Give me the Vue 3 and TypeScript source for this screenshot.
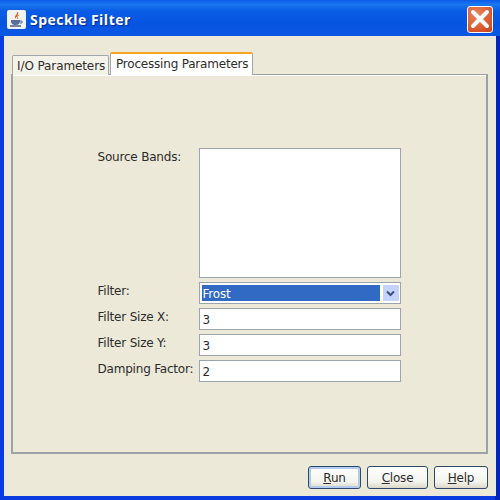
<script setup lang="ts">
import { ref } from "vue";

const tabs = ["I/O Parameters", "Processing Parameters"];
const activeTab = ref(1);

const fields = [
  { label: "Filter Size X:", value: "3" },
  { label: "Filter Size Y:", value: "3" },
  { label: "Damping Factor:", value: "2" },
];

const buttons = [
  { key: "R", rest: "un", cls: "btn-run" },
  { key: "C", rest: "lose", cls: "btn-close" },
  { key: "H", rest: "elp", cls: "btn-help" },
];
</script>

<template>
  <div class="window">
    <div class="titlebar">
      <div class="app-icon">
        <svg width="19" height="19" viewBox="0 0 19 19">
          <path d="M10 2c1 2-2 3-2 5 0 1 1 2 1 2-1-2 3-3 2-7z" fill="#d8572a" />
          <path d="M12 5c-2 1-2 2-1 4" stroke="#e0803a" stroke-width="1" fill="none" />
          <path d="M4 10h9v1c0 3-2 4-4.500 4S4 14 4 11z" fill="#5a6f9a" />
          <path d="M13 11h2v2h-2" stroke="#5a6f9a" stroke-width="1" fill="none" />
          <path d="M3 16h11" stroke="#4a5f8a" stroke-width="1.500" />
        </svg>
      </div>
      <span class="title">Speckle Filter</span>
      <div class="close-x">
        <svg width="20" height="20" viewBox="0 0 20 20">
          <path d="M3 3l14 14M17 3L3 17" stroke="#fff" stroke-width="4" stroke-linecap="round" />
        </svg>
      </div>
    </div>

    <div class="body">
      <div class="tabs">
        <div
          v-for="(tab, i) in tabs"
          :key="tab"
          class="tab"
          :class="{ active: i === activeTab }"
        >
          {{ tab }}
        </div>
      </div>

      <div class="panel">
        <div class="form">
          <div class="label">Source Bands:</div>
          <div class="listbox"></div>

          <div class="label">Filter:</div>
          <div class="combo">
            <div class="combo-value">Frost</div>
            <div class="combo-arrow">
              <svg width="9" height="7" viewBox="0 0 9 7">
                <path d="M1 1.500l3.500 3.500L8 1.500" stroke="#3c4f80" stroke-width="2" fill="none" />
              </svg>
            </div>
          </div>

          <template v-for="f in fields" :key="f.label">
            <div class="label">{{ f.label }}</div>
            <div class="input">{{ f.value }}</div>
          </template>
        </div>
      </div>

      <div class="footer">
        <div v-for="b in buttons" :key="b.key" class="btn" :class="b.cls">
          <span><u>{{ b.key }}</u>{{ b.rest }}</span>
        </div>
      </div>
    </div>
  </div>
</template>

<style>
html,
body {
  margin: 0;
  background: #0831d9;
}
</style>

<style scoped>
.window {
  width: 500px;
  height: 500px;
  box-sizing: border-box;
  display: flex;
  flex-direction: column;
  background: linear-gradient(90deg, #0a3be0 0 99%, #0426b8 99%);
  font-family: "DejaVu Sans", sans-serif;
  font-size: 12px;
  letter-spacing: -0.2px;
  color: #2c2c2c;
  overflow: hidden;
}

.titlebar {
  height: 36px;
  flex: none;
  box-sizing: border-box;
  padding: 5px 7px 3px 7px;
  display: flex;
  align-items: center;
  background: linear-gradient(180deg, #0a5ae8 0%, #1a78f0 12%, #0a5ce6 30%, #0654e0 70%, #0a58e4 100%);
}

.app-icon {
  width: 19px;
  height: 19px;
  background: #f2f2ee;
  border-radius: 2px;
  flex: none;
}

.title {
  margin-left: 4px;
  color: #fff;
  font-family: "Open Sans", sans-serif;
  font-weight: bold;
  font-size: 14px;
  letter-spacing: 0.5px;
  text-shadow: 1px 1px 1px #0a2a90;
}

.close-x {
  margin-left: auto;
  width: 26px;
  height: 27px;
  flex: none;
  box-sizing: border-box;
  border: 1px solid #fff;
  border-radius: 3px;
  background: radial-gradient(circle at 35% 30%, #e8845c, #d9582e 65%, #c4421c);
  display: flex;
  align-items: center;
  justify-content: center;
}

.body {
  flex: 1;
  min-height: 0;
  margin: 0 4px 4px;
  box-sizing: border-box;
  padding: 16px 8px 0 7px;
  background: #ece9d8;
  display: flex;
  flex-direction: column;
}

.tabs {
  display: flex;
  align-items: flex-end;
  height: 23px;
  padding-left: 1px;
  flex: none;
  position: relative;
  z-index: 1;
  margin-bottom: -1px;
}

.tab {
  box-sizing: border-box;
  height: 20px;
  width: 97px;
  margin-right: 1px;
  padding-left: 4px;
  background: #f4f3ea;
  border: 1px solid #a0a7ab;
  border-bottom: none;
  border-radius: 2px 2px 0 0;
  line-height: 20px;
  white-space: nowrap;
  letter-spacing: -0.1px;
}

.tab.active {
  height: 23px;
  width: 143px;
  background: #fff;
  border-top: 2px solid #f5a623;
  padding-left: 5px;
  line-height: 20px;
  letter-spacing: -0.2px;
}

.panel {
  flex: none;
  height: 380px;
  box-sizing: border-box;
  border-style: solid;
  border-color: #9ca3a6;
  border-width: 1px 2px 2px 2px;
  box-shadow: inset 0 1px 0 #fff;
  padding: 3px 2px 0 0;
  display: flex;
  align-items: center;
  justify-content: center;
}

.form {
  display: grid;
  grid-template-columns: 102px 202px;
  grid-template-rows: 130px;
  grid-auto-rows: 22px;
  row-gap: 4px;
}

.label {
  padding-left: 1px;
  line-height: 18px;
  white-space: nowrap;
}

.listbox,
.input,
.combo {
  box-sizing: border-box;
  background: #fff;
  border: 1px solid #9aa5ad;
}

.input {
  padding: 2px 0 0 3px;
  line-height: 18px;
}

.combo {
  display: flex;
  padding: 2px 1px 2px 2px;
  gap: 3px;
}

.combo-value {
  flex: 1;
  background: #316ac5;
  color: #fff;
  padding-left: 1px;
  line-height: 19px;
}

.combo-arrow {
  width: 16px;
  background: #c3d3fb;
  display: flex;
  align-items: center;
  justify-content: center;
  border-radius: 1px;
}

.footer {
  flex: 1;
  display: flex;
  justify-content: flex-end;
  align-items: flex-start;
  gap: 6px;
  padding: 12px 0 0;
}

.btn {
  box-sizing: border-box;
  height: 23px;
  border: 1px solid #2e4a68;
  border-radius: 3px;
  background: linear-gradient(180deg, #fff 0%, #f4f4ee 70%, #dcd8c8 100%);
  display: flex;
  align-items: center;
  justify-content: center;
}

.btn-run {
  width: 53px;
  box-shadow: inset 0 0 0 2px #b4cbf0;
}

.btn-close {
  width: 61px;
}

.btn-help {
  width: 54px;
}
</style>
